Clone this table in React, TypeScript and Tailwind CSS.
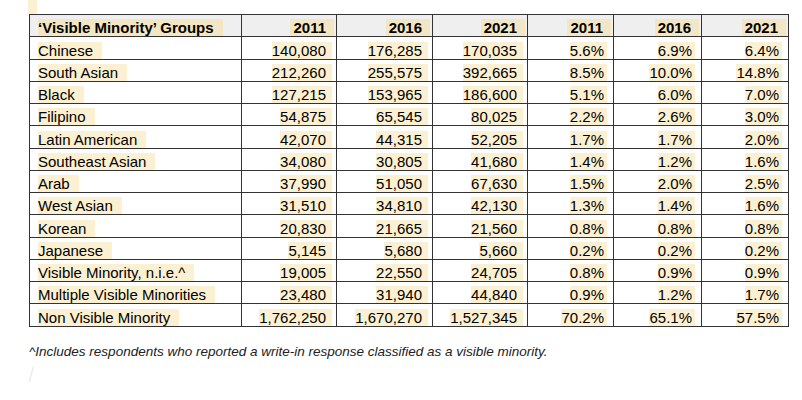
import React from "react";

type Row = { name: string; counts: string[]; shares: string[] };

const rows: Row[] = [
  { name: "Chinese", counts: ["140,080", "176,285", "170,035"], shares: ["5.6%", "6.9%", "6.4%"] },
  { name: "South Asian", counts: ["212,260", "255,575", "392,665"], shares: ["8.5%", "10.0%", "14.8%"] },
  { name: "Black", counts: ["127,215", "153,965", "186,600"], shares: ["5.1%", "6.0%", "7.0%"] },
  { name: "Filipino", counts: ["54,875", "65,545", "80,025"], shares: ["2.2%", "2.6%", "3.0%"] },
  { name: "Latin American", counts: ["42,070", "44,315", "52,205"], shares: ["1.7%", "1.7%", "2.0%"] },
  { name: "Southeast Asian", counts: ["34,080", "30,805", "41,680"], shares: ["1.4%", "1.2%", "1.6%"] },
  { name: "Arab", counts: ["37,990", "51,050", "67,630"], shares: ["1.5%", "2.0%", "2.5%"] },
  { name: "West Asian", counts: ["31,510", "34,810", "42,130"], shares: ["1.3%", "1.4%", "1.6%"] },
  { name: "Korean", counts: ["20,830", "21,665", "21,560"], shares: ["0.8%", "0.8%", "0.8%"] },
  { name: "Japanese", counts: ["5,145", "5,680", "5,660"], shares: ["0.2%", "0.2%", "0.2%"] },
  { name: "Visible Minority, n.i.e.^", counts: ["19,005", "22,550", "24,705"], shares: ["0.8%", "0.9%", "0.9%"] },
  { name: "Multiple Visible Minorities", counts: ["23,480", "31,940", "44,840"], shares: ["0.9%", "1.2%", "1.7%"] },
  { name: "Non Visible Minority", counts: ["1,762,250", "1,670,270", "1,527,345"], shares: ["70.2%", "65.1%", "57.5%"] },
];

const years = ["2011", "2016", "2021", "2011", "2016", "2021"];
const widths = ["w-[212px]", "w-[95px]", "w-[96px]", "w-[95px]", "w-[86px]", "w-[88px]", "w-[87px]"];

const cell = "border border-[#333] h-[22.25px] p-0 align-bottom leading-[17px]";

export default function App() {
  return (
    <div className="w-[802px] h-[400px] bg-white text-black font-['Liberation_Sans',Arial,sans-serif] text-[15px]">
      {/* highlighted empty line above the table */}
      <div className="ml-[28px] w-[9px] h-[14px] bg-[#fcf0d2]" />

      <table className="ml-[29px] table-fixed border-collapse">
        <colgroup>
          {widths.map((w, i) => (
            <col key={i} className={w} />
          ))}
        </colgroup>
        <thead>
          <tr className="bg-[#efefef]">
            <th className={`${cell} text-left font-bold pl-[8px]`}>
              <span className="bg-[#f2e6c4] pr-[9px]">‘Visible Minority’ Groups</span>
            </th>
            {years.map((y, i) => (
              <th key={i} className={`${cell} text-right font-bold pr-[2px]`}>
                <span className="bg-[#f2e6c4] pl-[3px] pr-[8px]">{y}</span>
              </th>
            ))}
          </tr>
        </thead>
        <tbody>
          {rows.map((r) => (
            <tr key={r.name}>
              <td className={`${cell} text-left pl-[8px]`}>
                <span className="bg-[#fcf0d2] pr-[9px]">{r.name}</span>
              </td>
              {r.counts.map((c, i) => (
                <td key={"c" + i} className={`${cell} text-right pr-[4px]`}>
                  <span className="bg-[#fcf0d2] pr-[6px]">{c}</span>
                </td>
              ))}
              {r.shares.map((s, i) => (
                <td key={"s" + i} className={`${cell} text-right pr-[6px]`}>
                  <span className="bg-[#fcf0d2] pr-[3px]">{s}</span>
                </td>
              ))}
            </tr>
          ))}
        </tbody>
      </table>

      <p className="ml-[29px] mt-[15px] text-[13.5px] italic text-[#222]">
        ^Includes respondents who reported a write-in response classified as a visible minority.
      </p>

      <svg className="ml-[27px] mt-[4px]" width="8" height="17" viewBox="0 0 8 17">
        <line x1="6.5" y1="0.5" x2="2" y2="16" stroke="#ececec" strokeWidth="1.5" />
      </svg>
    </div>
  );
}
